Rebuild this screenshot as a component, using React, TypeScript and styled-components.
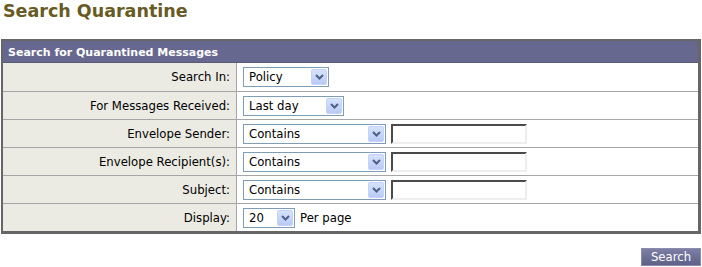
import React, { FunctionComponent } from 'react'
import styled, { createGlobalStyle } from 'styled-components'

const GlobalStyle = createGlobalStyle`
  body {
    margin: 0;
    background: #ffffff;
    font-family: 'DejaVu Sans', Verdana, sans-serif;
  }
`

const PageWrap = styled.div`
  width: 702px;
  height: 267px;
  box-sizing: border-box;
  padding: 0 1px 0 1px;
`

const PageTitle = styled.h1`
  margin: 0;
  padding: 0 0 0 2px;
  height: 39px;
  font-family: 'DejaVu Sans', Verdana, sans-serif;
  font-weight: bold;
  font-size: 17.5px;
  line-height: 22px;
  color: #675a22;
`

const Panel = styled.div`
  border: 2px solid #666666;
  border-right-width: 3px;
  border-bottom-width: 3px;
  background: #ffffff;
`

const PanelHeader = styled.div`
  height: 22px;
  background: #676890;
  color: #ffffff;
  font-weight: bold;
  font-size: 11px;
  line-height: 23px;
  padding-left: 5px;
  border-bottom: 1px solid #5a5a78;
  box-sizing: border-box;
`

const Row = styled.div`
  display: grid;
  grid-template-columns: 234px 1fr;
  height: 28px;
  box-sizing: border-box;
  & + & {
    border-top: 1px solid #a6a6a6;
  }
`

const Label = styled.div`
  background: #ebebe3;
  border-right: 1px solid #a6a6a6;
  font-size: 11.7px;
  color: #000000;
  text-align: right;
  padding: 7px 6px 0 0;
  box-sizing: border-box;
`

const Field = styled.div`
  display: flex;
  align-items: center;
  gap: 5px;
  padding-left: 6px;
  font-size: 11.7px;
`

const SelectBox = styled.div<{ $w: number }>`
  width: ${(p) => p.$w}px;
  height: 20px;
  box-sizing: border-box;
  border: 1px solid #7f9db9;
  background: #ffffff;
  display: flex;
  align-items: center;
  justify-content: space-between;
  padding: 0 1px 0 5px;
  font-size: 11.7px;
  color: #000000;
`

const Arrow = styled.div`
  width: 16px;
  height: 16px;
  box-sizing: border-box;
  border: 1px solid #c3d3fd;
  border-radius: 2px;
  background: linear-gradient(#d6e2fb, #b8cbf6);
  display: flex;
  align-items: center;
  justify-content: center;
`

const TextBox = styled.div`
  width: 136px;
  height: 20px;
  box-sizing: border-box;
  border-top: 2px solid #4a4a4a;
  border-left: 2px solid #4a4a4a;
  border-right: 2px solid #eeeeee;
  border-bottom: 2px solid #eeeeee;
  background: #ffffff;
`

const Actions = styled.div`
  display: flex;
  justify-content: flex-end;
  padding-top: 14px;
`

const SearchButton = styled.button`
  width: 60px;
  height: 18px;
  padding: 0;
  border: 1px solid #8c8cad;
  background: linear-gradient(#7c7ea6, #5f6188);
  color: #ffffff;
  font-family: 'DejaVu Sans', Verdana, sans-serif;
  font-size: 11.7px;
  line-height: 15px;
`

const Chevron = () => (
  <svg width="9" height="6" viewBox="0 0 9 6">
    <path d="M1 1 L4.5 4.5 L8 1" fill="none" stroke="#4d6185" strokeWidth="2" />
  </svg>
)

const Select: FunctionComponent<{ value: string; width: number }> = ({ value, width }) => (
  <SelectBox $w={width}>
    <span>{value}</span>
    <Arrow>
      <Chevron />
    </Arrow>
  </SelectBox>
)

const rows = [
  { label: 'Search In:', value: 'Policy', width: 86 },
  { label: 'For Messages Received:', value: 'Last day', width: 101 },
  { label: 'Envelope Sender:', value: 'Contains', width: 143, input: true },
  { label: 'Envelope Recipient(s):', value: 'Contains', width: 143, input: true },
  { label: 'Subject:', value: 'Contains', width: 143, input: true },
]

const App = () => {
  return (
    <PageWrap>
      <GlobalStyle />
      <PageTitle>Search Quarantine</PageTitle>
      <Panel>
        <PanelHeader>Search for Quarantined Messages</PanelHeader>
        {rows.map((row, index) => (
          <Row key={index}>
            <Label>{row.label}</Label>
            <Field>
              <Select value={row.value} width={row.width} />
              {row.input && <TextBox />}
            </Field>
          </Row>
        ))}
        <Row>
          <Label>Display:</Label>
          <Field>
            <Select value="20" width={52} />
            <span>Per page</span>
          </Field>
        </Row>
      </Panel>
      <Actions>
        <SearchButton>Search</SearchButton>
      </Actions>
    </PageWrap>
  )
}

export default App
